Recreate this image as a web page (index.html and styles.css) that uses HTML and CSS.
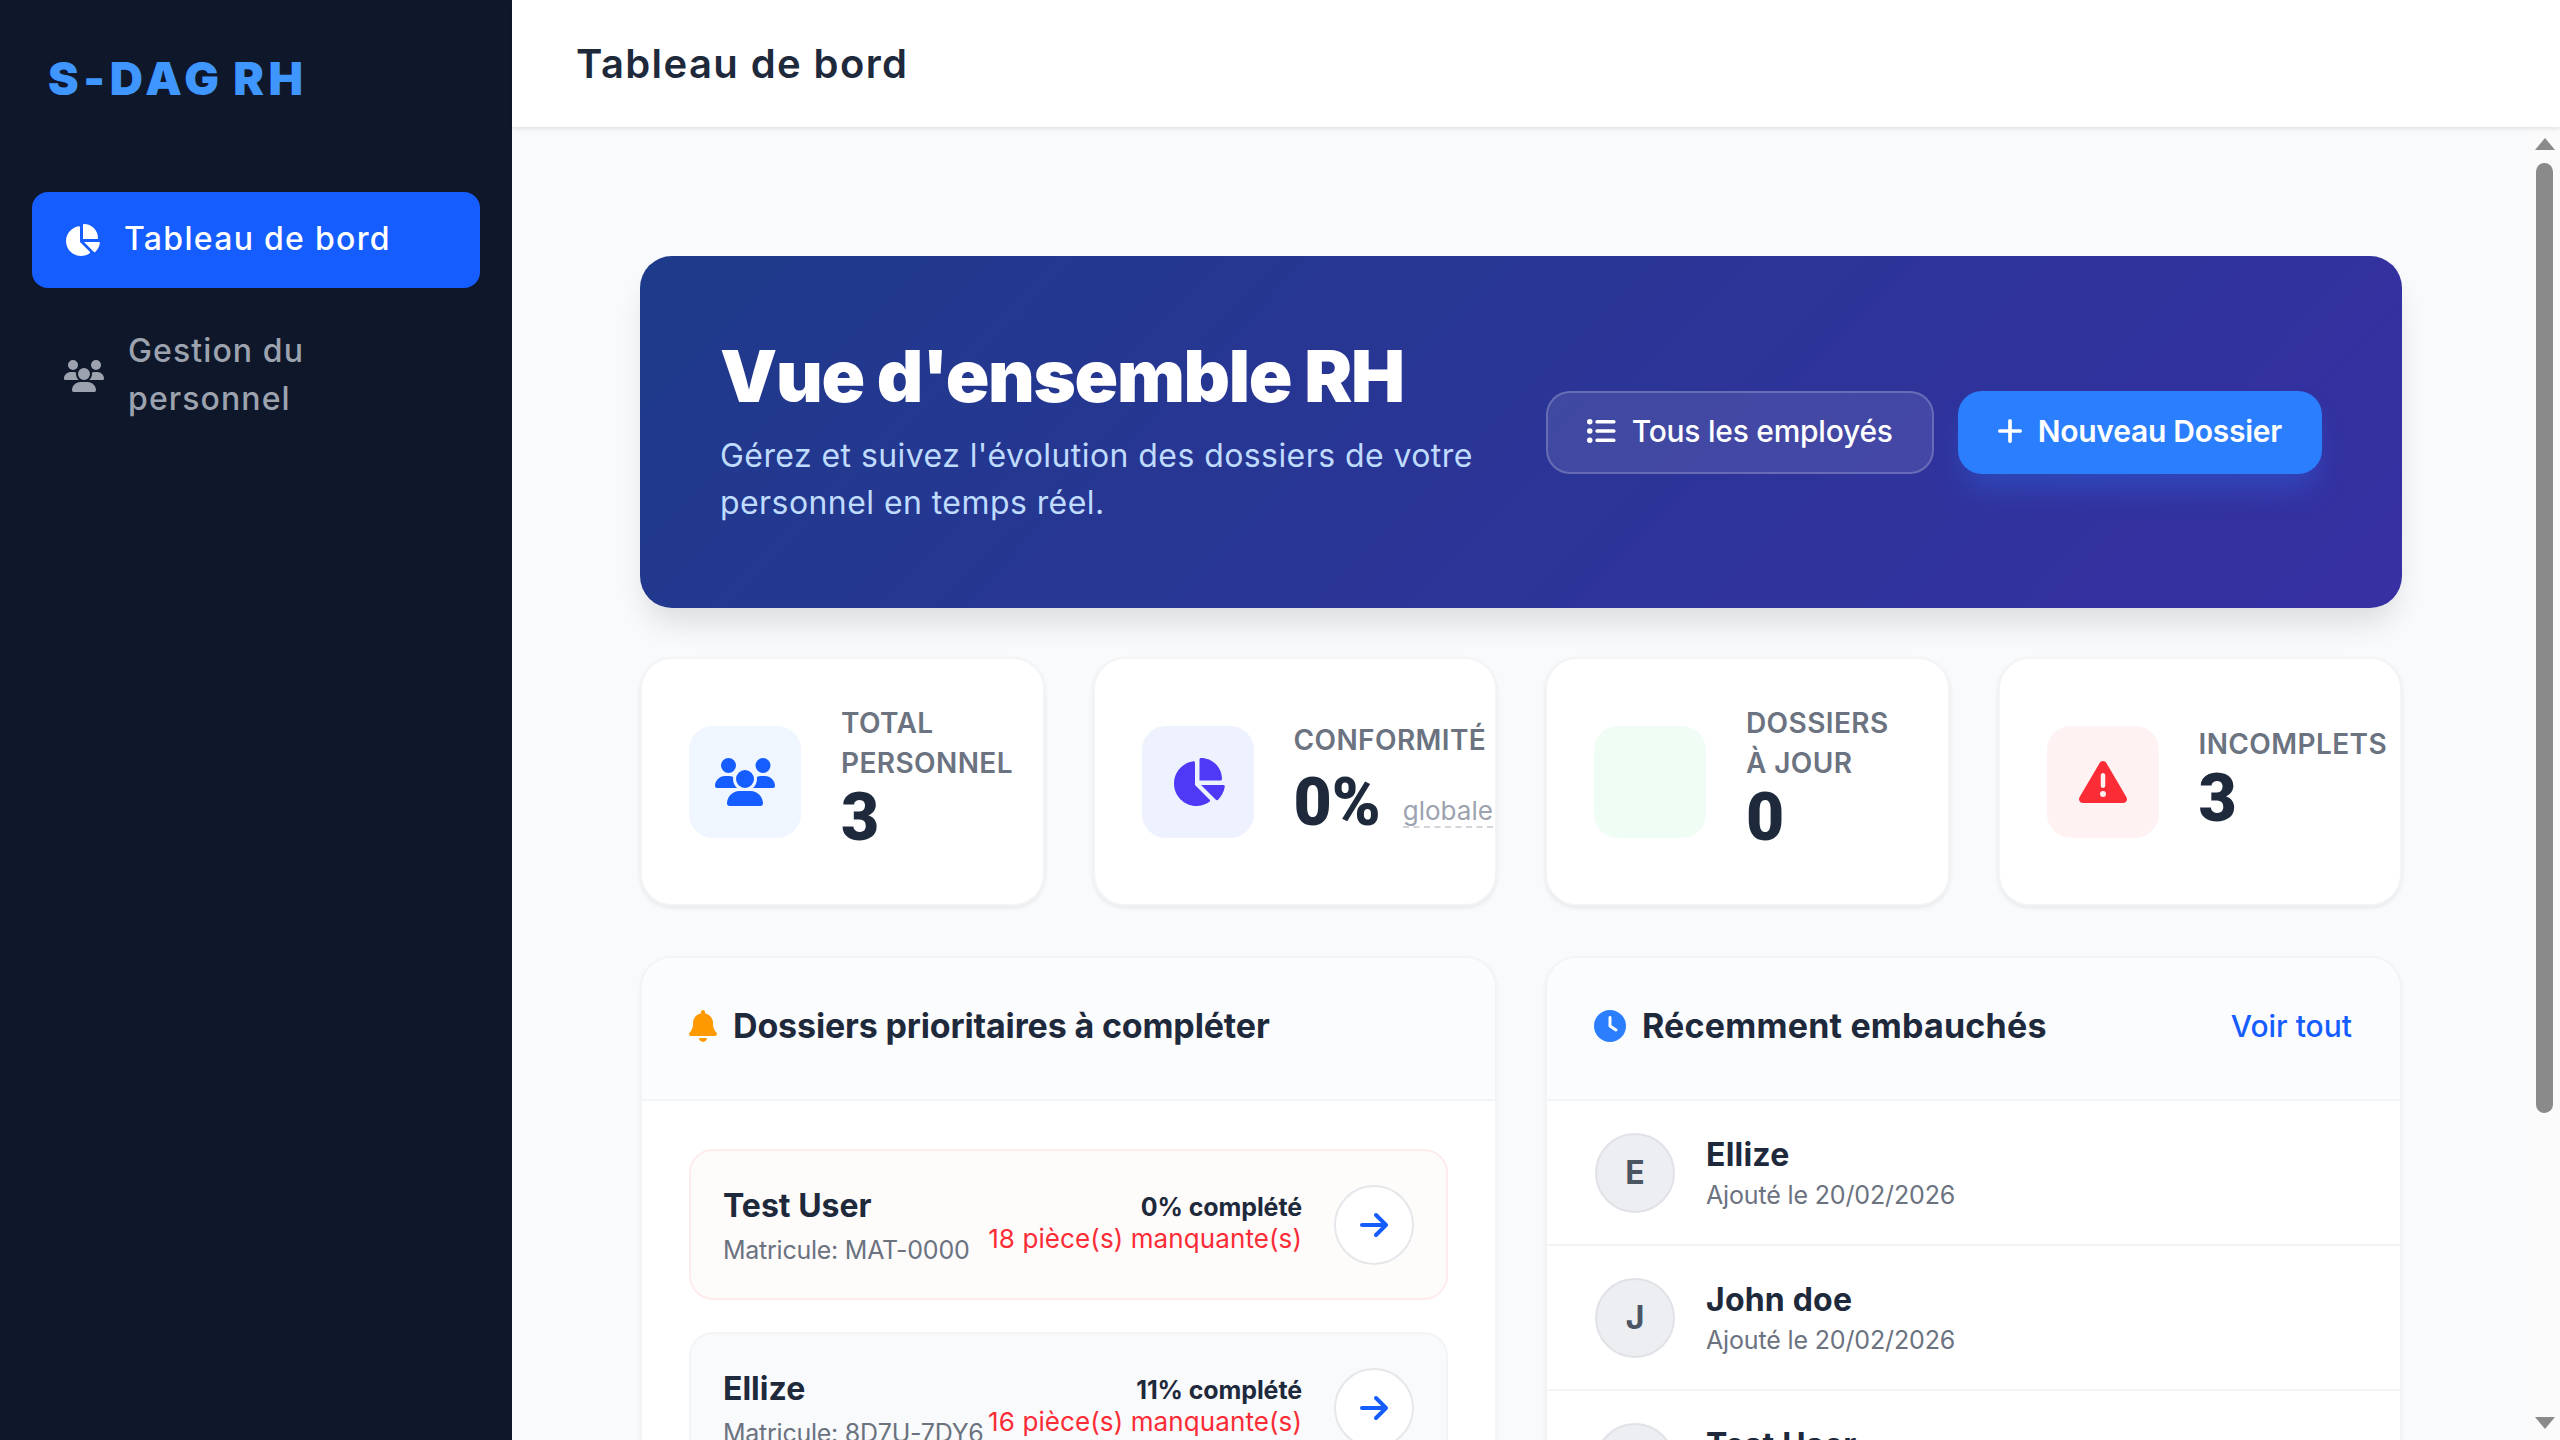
FILE: index.html
```html
<!DOCTYPE html>
<html lang="fr">
  <head>
    <meta charset="UTF-8" />
    <meta name="viewport" content="width=device-width, initial-scale=1.0" />
    <title>S-DAG RH - Tableau de bord</title>
    <link rel="stylesheet" href="styles.css">
  </head>
  <body>
    <div class="app">

      <aside class="sidebar">
        <div class="logo">S-DAG RH</div>
        <nav class="nav">
          <a class="nav-item active" href="#">
            <svg class="nav-icon" viewBox="0 0 576 512"><path d="M304 240V16.6c0-9 7-16.6 16-16.6C443.7 0 544 100.3 544 224c0 9-7.6 16-16.6 16H304zM32 272C32 150.7 122.1 50.3 239 34.3c9.2-1.3 17 6.1 17 15.4V288L412.5 444.5c6.7 6.7 6.2 17.7-1.5 23.1C371.8 495.6 323.8 512 272 512C139.5 512 32 404.6 32 272zm526.4 16c9.3 0 16.6 7.8 15.4 17c-7.7 55.9-34.6 105.6-73.9 142.3c-6 5.6-15.4 5.2-21.2-.7L320 288H558.4z"/></svg>
            <span class="nav-text">Tableau de bord</span>
          </a>
          <a class="nav-item" href="#">
            <svg class="nav-icon" viewBox="0 0 640 512"><path d="M144 0a80 80 0 1 1 0 160A80 80 0 1 1 144 0zM512 0a80 80 0 1 1 0 160A80 80 0 1 1 512 0zM0 298.7C0 239.8 47.8 192 106.7 192h42.7c15.9 0 31 3.5 44.6 9.7c-1.3 7.2-1.9 14.7-1.9 22.3c0 38.2 16.8 72.5 43.3 96c-.2 0-.4 0-.7 0H21.3C9.6 320 0 310.4 0 298.7zM405.3 320c-.2 0-.4 0-.7 0c26.6-23.5 43.3-57.8 43.3-96c0-7.6-.7-15-1.9-22.3c13.6-6.3 28.7-9.7 44.6-9.7h42.7C592.2 192 640 239.8 640 298.7c0 11.8-9.6 21.3-21.3 21.3H405.3zM224 224a96 96 0 1 1 192 0 96 96 0 1 1 -192 0zM128 485.3C128 411.7 187.7 352 261.3 352H378.7C452.3 352 512 411.7 512 485.3c0 14.7-11.9 26.7-26.7 26.7H154.7c-14.7 0-26.7-11.9-26.7-26.7z"/></svg>
            <span class="nav-text">Gestion du<br>personnel</span>
          </a>
        </nav>
      </aside>

      <div class="main">
        <header class="topbar">
          <h1 class="page-title">Tableau de bord</h1>
        </header>

        <div class="content-wrap">
          <main class="content">

            <section class="hero">
              <div class="hero-text">
                <h2 class="hero-title">Vue d'ensemble RH</h2>
                <p class="hero-sub">Gérez et suivez l'évolution des dossiers de votre<br>personnel en temps réel.</p>
              </div>
              <div class="hero-actions">
                <a class="btn btn-ghost" href="#">
                  <svg class="btn-icon" viewBox="16 48 496 416"><path d="M64 144a48 48 0 1 0 0-96 48 48 0 1 0 0 96zM192 64c-17.7 0-32 14.3-32 32s14.3 32 32 32H480c17.7 0 32-14.3 32-32s-14.3-32-32-32H192zm0 160c-17.7 0-32 14.3-32 32s14.3 32 32 32H480c17.7 0 32-14.3 32-32s-14.3-32-32-32H192zm0 160c-17.7 0-32 14.3-32 32s14.3 32 32 32H480c17.7 0 32-14.3 32-32s-14.3-32-32-32H192zM64 464a48 48 0 1 0 0-96 48 48 0 1 0 0 96zm48-208a48 48 0 1 0 -96 0 48 48 0 1 0 96 0z"/></svg>
                  Tous les employés
                </a>
                <a class="btn btn-primary" href="#">
                  <svg class="btn-icon" viewBox="16 48 416 416"><path d="M256 80c0-17.7-14.3-32-32-32s-32 14.3-32 32V224H48c-17.7 0-32 14.3-32 32s14.3 32 32 32H192V432c0 17.7 14.3 32 32 32s32-14.3 32-32V288H400c17.7 0 32-14.3 32-32s-14.3-32-32-32H256V80z"/></svg>
                  Nouveau Dossier
                </a>
              </div>
            </section>

            <section class="stats">
              <div class="stat-card">
                <div class="stat-icon tint-blue">
                  <svg class="stat-svg" viewBox="0 0 640 512"><path d="M144 0a80 80 0 1 1 0 160A80 80 0 1 1 144 0zM512 0a80 80 0 1 1 0 160A80 80 0 1 1 512 0zM0 298.7C0 239.8 47.8 192 106.7 192h42.7c15.9 0 31 3.5 44.6 9.7c-1.3 7.2-1.9 14.7-1.9 22.3c0 38.2 16.8 72.5 43.3 96c-.2 0-.4 0-.7 0H21.3C9.6 320 0 310.4 0 298.7zM405.3 320c-.2 0-.4 0-.7 0c26.6-23.5 43.3-57.8 43.3-96c0-7.6-.7-15-1.9-22.3c13.6-6.3 28.7-9.7 44.6-9.7h42.7C592.2 192 640 239.8 640 298.7c0 11.8-9.6 21.3-21.3 21.3H405.3zM224 224a96 96 0 1 1 192 0 96 96 0 1 1 -192 0zM128 485.3C128 411.7 187.7 352 261.3 352H378.7C452.3 352 512 411.7 512 485.3c0 14.7-11.9 26.7-26.7 26.7H154.7c-14.7 0-26.7-11.9-26.7-26.7z"/></svg>
                </div>
                <div class="stat-body">
                  <div class="stat-label">Total<br>personnel</div>
                  <div class="stat-value tall">3</div>
                </div>
              </div>
              <div class="stat-card">
                <div class="stat-icon tint-violet">
                  <svg class="stat-svg" viewBox="0 0 576 512"><path d="M304 240V16.6c0-9 7-16.6 16-16.6C443.7 0 544 100.3 544 224c0 9-7.6 16-16.6 16H304zM32 272C32 150.7 122.1 50.3 239 34.3c9.2-1.3 17 6.1 17 15.4V288L412.5 444.5c6.7 6.7 6.2 17.7-1.5 23.1C371.8 495.6 323.8 512 272 512C139.5 512 32 404.6 32 272zm526.4 16c9.3 0 16.6 7.8 15.4 17c-7.7 55.9-34.6 105.6-73.9 142.3c-6 5.6-15.4 5.2-21.2-.7L320 288H558.4z"/></svg>
                </div>
                <div class="stat-body">
                  <div class="stat-label">Conformité</div>
                  <div class="stat-value with-note">0%<span class="stat-note">globale</span></div>
                </div>
              </div>
              <div class="stat-card">
                <div class="stat-icon tint-green"></div>
                <div class="stat-body">
                  <div class="stat-label">Dossiers<br>à jour</div>
                  <div class="stat-value tall">0</div>
                </div>
              </div>
              <div class="stat-card">
                <div class="stat-icon tint-red">
                  <svg class="stat-svg" viewBox="0 0 512 512"><path d="M256 32c14.2 0 27.3 7.5 34.5 19.8l216 368c7.3 12.4 7.3 27.7 .2 40.1S486.3 480 472 480H40c-14.3 0-27.6-7.7-34.7-20.1s-7-27.8 .2-40.1l216-368C228.7 39.5 241.8 32 256 32zm0 128c-13.3 0-24 10.7-24 24V296c0 13.3 10.7 24 24 24s24-10.7 24-24V184c0-13.3-10.7-24-24-24zm32 224a32 32 0 1 0 -64 0 32 32 0 1 0 64 0z"/></svg>
                </div>
                <div class="stat-body">
                  <div class="stat-label">Incomplets</div>
                  <div class="stat-value">3</div>
                </div>
              </div>
            </section>

            <section class="panels">
              <div class="panel">
                <div class="panel-head">
                  <h3 class="panel-title tight">
                    <svg class="panel-icon icon-bell" viewBox="0 0 448 512"><path d="M224 0c-17.7 0-32 14.3-32 32V51.2C119 66 64 130.6 64 208v18.8c0 47-17.3 92.4-48.5 127.6l-7.4 8.3c-8.4 9.4-10.4 22.9-5.3 34.4S19.4 416 32 416H416c12.6 0 24-7.4 29.2-18.9s3.1-25-5.3-34.4l-7.4-8.3C401.3 319.2 384 273.9 384 226.8V208c0-77.4-55-142-128-156.8V32c0-17.7-14.3-32-32-32zm45.3 493.3c12-12 18.7-28.3 18.7-45.3H224 160c0 17 6.7 33.3 18.7 45.3s28.3 18.7 45.3 18.7s33.3-6.7 45.3-18.7z"/></svg>
                    Dossiers prioritaires à compléter
                  </h3>
                </div>
                <div class="priority-list">
                  <div class="priority-row urgent">
                    <div class="priority-who">
                      <div class="priority-name">Test User</div>
                      <div class="priority-id">Matricule: MAT-0000</div>
                    </div>
                    <div class="priority-state">
                      <div class="priority-pct">0% complété</div>
                      <div class="priority-missing">18 pièce(s) manquante(s)</div>
                    </div>
                    <a class="row-go" href="#"><svg viewBox="0 0 448 512"><path d="M438.6 278.6c12.5-12.5 12.5-32.8 0-45.3l-160-160c-12.5-12.5-32.8-12.5-45.3 0s-12.5 32.8 0 45.3L338.8 224 32 224c-17.7 0-32 14.3-32 32s14.3 32 32 32l306.7 0L233.4 393.4c-12.5 12.5-12.5 32.8 0 45.3s32.8 12.5 45.3 0l160-160z"/></svg></a>
                  </div>
                  <div class="priority-row">
                    <div class="priority-who">
                      <div class="priority-name">Ellize</div>
                      <div class="priority-id">Matricule: 8D7U-7DY6</div>
                    </div>
                    <div class="priority-state">
                      <div class="priority-pct">11% complété</div>
                      <div class="priority-missing">16 pièce(s) manquante(s)</div>
                    </div>
                    <a class="row-go" href="#"><svg viewBox="0 0 448 512"><path d="M438.6 278.6c12.5-12.5 12.5-32.8 0-45.3l-160-160c-12.5-12.5-32.8-12.5-45.3 0s-12.5 32.8 0 45.3L338.8 224 32 224c-17.7 0-32 14.3-32 32s14.3 32 32 32l306.7 0L233.4 393.4c-12.5 12.5-12.5 32.8 0 45.3s32.8 12.5 45.3 0l160-160z"/></svg></a>
                  </div>
                </div>
              </div>

              <div class="panel">
                <div class="panel-head">
                  <h3 class="panel-title">
                    <svg class="panel-icon icon-clock" viewBox="0 0 512 512"><path d="M256 0a256 256 0 1 1 0 512A256 256 0 1 1 256 0zM232 120V256c0 8 4 15.5 10.7 20l96 64c11 7.4 25.9 4.4 33.3-6.7s4.4-25.9-6.7-33.3L280 243.2V120c0-13.3-10.7-24-24-24s-24 10.7-24 24z"/></svg>
                    Récemment embauchés
                  </h3>
                  <a class="see-all" href="#">Voir tout</a>
                </div>
                <div class="recent-list">
                  <div class="recent-row">
                    <div class="avatar">E</div>
                    <div>
                      <div class="recent-name">Ellize</div>
                      <div class="recent-date">Ajouté le 20/02/2026</div>
                    </div>
                  </div>
                  <div class="recent-row">
                    <div class="avatar">J</div>
                    <div>
                      <div class="recent-name">John doe</div>
                      <div class="recent-date">Ajouté le 20/02/2026</div>
                    </div>
                  </div>
                  <div class="recent-row">
                    <div class="avatar">T</div>
                    <div>
                      <div class="recent-name">Test User</div>
                      <div class="recent-date">Ajouté le 20/02/2026</div>
                    </div>
                  </div>
                </div>
              </div>
            </section>

          </main>

          <div class="scrollbar">
            <div class="scroll-up"></div>
            <div class="scroll-thumb"></div>
            <div class="scroll-down"></div>
          </div>
        </div>
      </div>

    </div>
  </body>
</html>
```

FILE: styles.css
```css
* {
  box-sizing: border-box;
}

body {
  margin: 0;
  font-family: "Inter", "Noto Sans", sans-serif;
  color: #1e293b;
  background: #f9fafc;
}

a {
  text-decoration: none;
}

h1, h2, h3, p {
  margin: 0;
}

svg {
  display: block;
  fill: currentColor;
  flex-shrink: 0;
}

.app {
  display: flex;
  height: 100vh;
  overflow: hidden;
}

/* sidebar */
.sidebar {
  width: 512px;
  flex-shrink: 0;
  background: #0f172a;
  padding: 48px 32px;
}

.logo {
  margin-left: 16px;
  height: 96px;
  font-size: 46px;
  line-height: 60px;
  font-weight: 900;
  letter-spacing: 4.6px;
  word-spacing: -4px;
  color: #4096ff;
}

.nav {
  margin-top: 48px;
  display: flex;
  flex-direction: column;
  gap: 16px;
}

.nav-item {
  display: flex;
  align-items: center;
  gap: 24px;
  padding: 24px 32px;
  border-radius: 16px;
  color: #9ca3af;
  font-size: 32px;
  line-height: 48px;
  font-weight: 500;
  letter-spacing: 1.1px;
}

.nav-item.active {
  background: #165dff;
  color: #fff;
  letter-spacing: 1.3px;
}

.nav-icon {
  height: 32px;
}

.nav-text {
  position: relative;
  top: -1px;
}

/* top bar */
.main {
  flex: 1;
  min-width: 0;
  display: flex;
  flex-direction: column;
}

.topbar {
  height: 127px;
  flex-shrink: 0;
  background: #fff;
  padding: 0 64px;
  display: flex;
  align-items: center;
  box-shadow: 0 2px 4px rgba(0, 0, 0, 0.1);
  position: relative;
  z-index: 2;
}

.page-title {
  font-size: 40px;
  font-weight: 600;
  letter-spacing: 1.4px;
  color: #1e293b;
}

/* scrolled area */
.content-wrap {
  flex: 1;
  min-height: 0;
  position: relative;
  overflow: hidden;
}

.content {
  width: 2018px;
  padding: 129px 128px 0;
}

/* hero */
.hero {
  height: 352px;
  padding: 0 80px;
  border-radius: 32px;
  background: linear-gradient(135deg, #1e3a8a, #3730a3);
  box-shadow: 0 20px 30px -6px rgba(0, 0, 0, 0.12);
  display: flex;
  align-items: center;
  justify-content: space-between;
}

.hero-text {
  margin-bottom: 3px;
}

.hero-title {
  font-size: 72px;
  line-height: 80px;
  font-weight: 900;
  letter-spacing: -1.3px;
  color: #fff;
}

.hero-sub {
  margin-top: 16px;
  font-size: 32px;
  line-height: 47px;
  letter-spacing: 0.43px;
  color: #bfdbfe;
}

.hero-actions {
  display: flex;
  gap: 24px;
}

.btn {
  height: 83px;
  padding: 0 40px 2px;
  border-radius: 24px;
  display: flex;
  align-items: center;
  gap: 16px;
  font-size: 30px;
  letter-spacing: -0.25px;
  color: #fff;
}

.btn-icon {
  height: 24px;
}

.btn-ghost {
  padding: 0 39px 2px;
  font-weight: 500;
  background: rgba(255, 255, 255, 0.1);
  border: 2px solid rgba(255, 255, 255, 0.2);
}

.btn-primary {
  font-weight: 600;
  background: #2b7fff;
  box-shadow: 0 20px 30px -6px rgba(43, 127, 255, 0.3);
}

/* stat cards */
.stats {
  margin-top: 49px;
  display: grid;
  grid-template-columns: repeat(4, minmax(0, 1fr));
  gap: 48px;
}

.stat-card {
  height: 249px;
  padding: 0 47px;
  background: #fff;
  border: 2px solid #f3f4f6;
  border-radius: 32px;
  box-shadow: 0 2px 4px rgba(0, 0, 0, 0.08);
  display: flex;
  align-items: center;
  gap: 40px;
}

.stat-icon {
  width: 112px;
  height: 112px;
  flex-shrink: 0;
  border-radius: 24px;
  display: flex;
  align-items: center;
  justify-content: center;
}

.tint-blue { background: #eff6ff; color: #165dff; }
.tint-violet { background: #eef2ff; color: #4f39f6; }
.tint-green { background: #f0fdf4; }
.tint-red { background: #fef2f2; color: #fb2c36; }

.stat-svg {
  height: 48px;
}

.stat-body {
  min-width: 0;
}

.stat-label {
  font-size: 28px;
  line-height: 40px;
  font-weight: 600;
  letter-spacing: 0.4px;
  text-transform: uppercase;
  white-space: nowrap;
  color: #6b7280;
}

.stat-value {
  padding-bottom: 6px;
  font-family: "Roboto", "Inter", sans-serif;
  font-size: 66px;
  line-height: 70px;
  font-weight: 900;
  white-space: nowrap;
  color: #1e293b;
}

.stat-value.tall {
  padding-bottom: 8px;
}

.stat-value.with-note {
  margin-top: 8px;
}

.stat-note {
  margin-left: 22px;
  font-family: "Inter", sans-serif;
  font-size: 26px;
  line-height: 40px;
  font-weight: 400;
  color: #9ca3af;
  border-bottom: 2px dashed #d1d5db;
  vertical-align: 5px;
}

/* panels */
.panels {
  margin-top: 50px;
  display: grid;
  grid-template-columns: 1fr 1fr;
  gap: 48px;
}

.panel {
  background: #fff;
  border: 2px solid #f3f4f6;
  border-radius: 32px;
  box-shadow: 0 2px 4px rgba(0, 0, 0, 0.05);
  overflow: hidden;
}

.panel-head {
  height: 143px;
  padding: 0 48px 6px 47px;
  background: #fbfcfe;
  border-bottom: 2px solid #f3f4f6;
  display: flex;
  align-items: center;
  justify-content: space-between;
}

.panel-title {
  display: flex;
  align-items: center;
  gap: 16px;
  font-size: 34px;
  font-weight: 700;
  letter-spacing: 0.2px;
  color: #1e293b;
}

.panel-title.tight {
  letter-spacing: -0.15px;
}

.panel-icon {
  height: 32px;
}

.icon-bell { color: #fe9a00; }
.icon-clock { color: #2b7fff; }

.see-all {
  font-size: 30px;
  font-weight: 500;
  color: #165dff;
}

/* priority rows */
.priority-list {
  padding: 48px 47px;
  display: flex;
  flex-direction: column;
  gap: 32px;
}

.priority-row {
  height: 151px;
  padding: 0 32px;
  background: #f9fafb;
  border: 2px solid #f3f4f6;
  border-radius: 24px;
  display: flex;
  align-items: center;
}

.priority-row.urgent {
  background: #fefbfb;
  border-color: #feeced;
}

.priority-who {
  flex: 1;
  min-width: 0;
  padding-top: 1px;
}

.priority-name {
  font-size: 32px;
  line-height: 46px;
  font-weight: 700;
}

.priority-id {
  margin-top: 3px;
  font-size: 25px;
  line-height: 36px;
  letter-spacing: -0.25px;
  white-space: nowrap;
  color: #6b7280;
}

.priority-state {
  padding-bottom: 3px;
  text-align: right;
  white-space: nowrap;
}

.priority-pct {
  font-size: 25px;
  line-height: 32px;
  font-weight: 700;
  letter-spacing: -0.1px;
}

.priority-missing {
  font-size: 26px;
  line-height: 32px;
  letter-spacing: 0.1px;
  color: #fb2c36;
}

.row-go {
  width: 80px;
  height: 80px;
  flex-shrink: 0;
  margin-left: 32px;
  background: #fff;
  border: 2px solid #e5e7eb;
  border-radius: 50%;
  color: #165dff;
  display: flex;
  align-items: center;
  justify-content: center;
}

.row-go svg {
  height: 32px;
}

/* recent hires */
.recent-row {
  height: 145px;
  padding: 0 48px;
  border-bottom: 2px solid #f3f4f6;
  display: flex;
  align-items: center;
  gap: 31px;
}

.avatar {
  width: 80px;
  height: 80px;
  flex-shrink: 0;
  border-radius: 50%;
  background: #eceef2;
  border: 2px solid #e0e2e7;
  display: flex;
  align-items: center;
  justify-content: center;
  font-size: 32px;
  font-weight: 700;
  color: #4b5563;
}

.recent-name {
  font-size: 32px;
  line-height: 44px;
  font-weight: 700;
  letter-spacing: 0.2px;
}

.recent-date {
  font-size: 25px;
  line-height: 36px;
  letter-spacing: -0.15px;
  color: #6b7280;
}

/* page scrollbar, drawn over the right edge */
.scrollbar {
  position: absolute;
  top: 0;
  right: 0;
  bottom: 0;
  width: 30px;
  background: #fbfbfb;
}

.scroll-thumb {
  position: absolute;
  top: 36px;
  left: 6px;
  width: 17px;
  height: 950px;
  border-radius: 9px;
  background: #8a8a8a;
}

.scroll-up,
.scroll-down {
  position: absolute;
  left: 5px;
  width: 0;
  height: 0;
  border-left: 10px solid transparent;
  border-right: 10px solid transparent;
}

.scroll-up {
  top: 11px;
  border-bottom: 12px solid #8a8a8a;
}

.scroll-down {
  bottom: 11px;
  border-top: 12px solid #8a8a8a;
}
```
